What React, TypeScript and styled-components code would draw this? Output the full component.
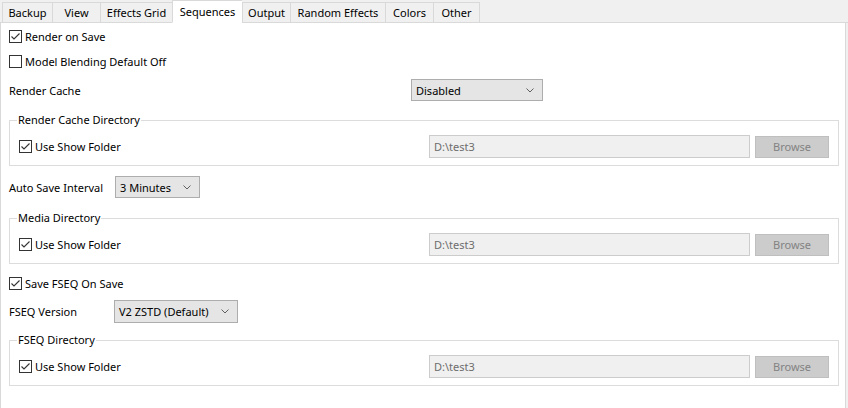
import React from "react";
import styled, { createGlobalStyle } from "styled-components";

const GlobalStyle = createGlobalStyle`
  html, body { margin: 0; padding: 0; }
  body {
    background: #f0f0f0;
    font-family: "Noto Sans", "Open Sans", sans-serif;
    font-size: 11px;
    color: #000;
  }
`;

const Root = styled.div`
  width: 848px;
  height: 408px;
  display: flex;
  flex-direction: column;
  background: #f0f0f0;
  overflow: hidden;
`;

const TabStrip = styled.div`
  display: flex;
  align-items: flex-end;
  height: 23px;
  flex: none;
`;

const StripGap = styled.div<{ $w?: number }>`
  height: 100%;
  box-sizing: border-box;
  border-bottom: 1px solid #d9d9d9;
  ${(p) => (p.$w ? `width: ${p.$w}px; flex: none;` : "flex: 1;")}
`;

const Tab = styled.div<{ $w: number; $active?: boolean; $last?: boolean }>`
  box-sizing: border-box;
  width: ${(p) => p.$w}px;
  height: ${(p) => (p.$active ? 23 : 21)}px;
  display: flex;
  align-items: center;
  justify-content: center;
  padding-bottom: ${(p) => (p.$active ? 1 : 0)}px;
  border-top: 1px solid #d9d9d9;
  border-left: 1px solid #d9d9d9;
  border-right: ${(p) => (p.$last ? "1px solid #d9d9d9" : "none")};
  border-bottom: ${(p) => (p.$active ? "1px solid #ffffff" : "1px solid #d9d9d9")};
  background: ${(p) => (p.$active ? "#ffffff" : "#f0f0f0")};
  white-space: nowrap;
`;

const Panel = styled.div`
  flex: 1;
  width: 846px;
  box-sizing: border-box;
  background: #fff;
  border-left: 1px solid #d9d9d9;
  border-right: 1px solid #d9d9d9;
  padding: 1px 6px 0 8px;
  display: flex;
  flex-direction: column;
`;

const CheckRow = styled.label<{ $h: number; $mt?: number }>`
  display: flex;
  align-items: center;
  gap: 3px;
  height: ${(p) => p.$h}px;
  margin-top: ${(p) => p.$mt ?? 0}px;
  flex: none;
  white-space: nowrap;
`;

const Box = styled.span`
  width: 13px;
  height: 13px;
  box-sizing: border-box;
  border: 1px solid #333;
  background: #fff;
  display: inline-flex;
  align-items: center;
  justify-content: center;
  flex: none;
`;

const FieldRow = styled.div<{ $labelWidth: number; $mt: number }>`
  display: grid;
  grid-template-columns: ${(p) => p.$labelWidth}px auto 1fr;
  align-items: center;
  height: 22px;
  margin-top: ${(p) => p.$mt}px;
  flex: none;
`;

const Select = styled.div<{ $w: number; $h?: number }>`
  box-sizing: border-box;
  width: ${(p) => p.$w}px;
  height: ${(p) => p.$h ?? 22}px;
  background: #e5e5e5;
  border: 1px solid #adadad;
  display: flex;
  align-items: center;
  justify-content: space-between;
  padding: 0 8px 0 4px;
  white-space: nowrap;
`;

const Group = styled.fieldset<{ $mt: number }>`
  margin: ${(p) => p.$mt}px 0 0 0;
  padding: 7px 9px 8px 9px;
  border: 1px solid #dcdcdc;
  min-width: 0;
  flex: none;
`;

const Legend = styled.legend`
  margin-left: -2px;
  padding: 0 1px;
  line-height: 16px;
`;

const DirRow = styled.div`
  display: grid;
  grid-template-columns: 1fr 321px 74px;
  column-gap: 5px;
  align-items: center;
  height: 22px;
`;

const PathInput = styled.div`
  box-sizing: border-box;
  height: 23px;
  background: #f0f0f0;
  border: 1px solid #cccccc;
  color: #6d6d6d;
  display: flex;
  align-items: center;
  padding-left: 4px;
`;

const BrowseButton = styled.div`
  box-sizing: border-box;
  height: 22px;
  background: #cccccc;
  border: 1px solid #bfbfbf;
  color: #838383;
  display: flex;
  align-items: center;
  justify-content: center;
`;

const Check = () => (
  <svg width="11" height="11" viewBox="0 0 11 11">
    <polyline points="1.5,5.5 4,8 9.5,2.5" fill="none" stroke="#333" strokeWidth="1.1" />
  </svg>
);

const Checkbox = ({ checked, label, h, mt }: { checked: boolean; label: string; h: number; mt?: number }) => (
  <CheckRow $h={h} $mt={mt}>
    <Box>{checked && <Check />}</Box>
    <span>{label}</span>
  </CheckRow>
);

const Chevron = () => (
  <svg width="8" height="5" viewBox="0 0 8 5">
    <polyline points="0.5,0.5 4,4 7.5,0.5" fill="none" stroke="#606060" strokeWidth="1" />
  </svg>
);

const Dropdown = ({ value, w, h }: { value: string; w: number; h?: number }) => (
  <Select $w={w} $h={h}>
    <span>{value}</span>
    <Chevron />
  </Select>
);

const DirGroup = ({ title, mt }: { title: string; mt: number }) => (
  <Group $mt={mt}>
    <Legend>{title}</Legend>
    <DirRow>
      <Checkbox checked label="Use Show Folder" h={22} />
      <PathInput>D:\test3</PathInput>
      <BrowseButton>Browse</BrowseButton>
    </DirRow>
  </Group>
);

const tabs = [
  { label: "Backup", w: 50 },
  { label: "View", w: 48 },
  { label: "Effects Grid", w: 72 },
  { label: "Sequences", w: 70, active: true },
  { label: "Output", w: 48 },
  { label: "Random Effects", w: 95 },
  { label: "Colors", w: 48 },
  { label: "Other", w: 47, last: true },
];

export default function App() {
  return (
    <Root>
      <GlobalStyle />
      <TabStrip>
        <StripGap $w={2} />
        {tabs.map((t) => (
          <Tab key={t.label} $w={t.w} $active={t.active} $last={t.last}>
            {t.label}
          </Tab>
        ))}
        <StripGap />
      </TabStrip>
      <Panel>
        <Checkbox checked label="Render on Save" h={25} />
        <Checkbox checked={false} label="Model Blending Default Off" h={25} />
        <FieldRow $labelWidth={402} $mt={5}>
          <span>Render Cache</span>
          <Dropdown value="Disabled" w={132} />
        </FieldRow>
        <DirGroup title="Render Cache Directory" mt={11} />
        <FieldRow $labelWidth={106} $mt={10}>
          <span>Auto Save Interval</span>
          <Dropdown value="3 Minutes" w={85} />
        </FieldRow>
        <DirGroup title="Media Directory" mt={12} />
        <Checkbox checked label="Save FSEQ On Save" h={25} mt={7} />
        <FieldRow $labelWidth={105} $mt={4}>
          <span>FSEQ Version</span>
          <Dropdown value="V2 ZSTD (Default)" w={124} h={23} />
        </FieldRow>
        <DirGroup title="FSEQ Directory" mt={10} />
      </Panel>
    </Root>
  );
}
